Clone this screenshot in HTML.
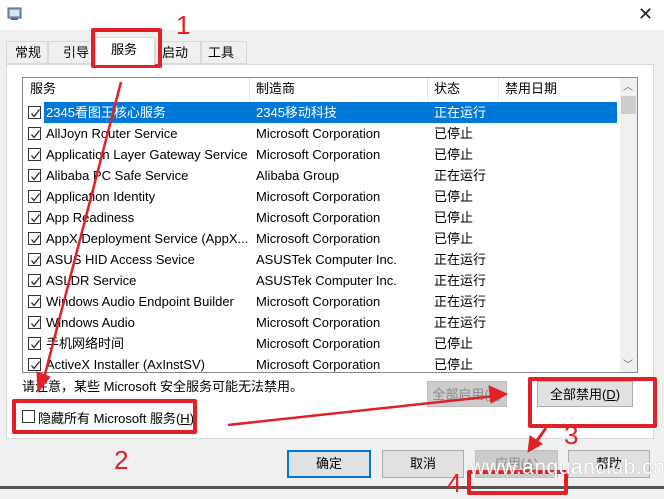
<!DOCTYPE html>
<html><head><meta charset="utf-8"><style>
*{margin:0;padding:0;box-sizing:border-box}
body{width:664px;height:489px;overflow:hidden;background:#f0f0f0;font-family:"Liberation Sans","Noto Sans CJK SC",sans-serif;font-size:13px;color:#000;position:relative}
.a{position:absolute;white-space:nowrap}
.row{position:absolute;left:23px;width:596px;height:21px;line-height:21px}
.cb{position:absolute;left:5px;top:4px;width:13px;height:13px;border:1px solid #333;background:#fff}
.cb svg{position:absolute;left:1px;top:1px}
.btn{position:absolute;background:#e1e1e1;border:1px solid #adadad;text-align:center;line-height:26px}
.red{position:absolute;border:4px solid #e02228;border-radius:2px}
.num{position:absolute;color:#e02228;font-size:26px;font-family:"Liberation Sans",sans-serif}
</style></head><body>
<div class="a" style="left:0;top:0;width:664px;height:30px;background:#fff"></div>
<svg class="a" style="left:7px;top:6px" width="16" height="16"><rect x="1" y="2" width="13" height="10" fill="#8aa6c8" stroke="#45607f"/><rect x="3" y="4" width="9" height="6" fill="#d8e6f5"/><rect x="4" y="12" width="7" height="2" fill="#666"/></svg>
<div class="a" style="left:638px;top:4px;font-size:18px;color:#222">✕</div>
<div class="a" style="left:6px;top:41px;width:42px;height:23px;border:1px solid #d9d9d9;background:#f0f0f0;line-height:21px;padding-left:8px">常规</div>
<div class="a" style="left:48px;top:41px;width:47px;height:23px;border:1px solid #d9d9d9;background:#f0f0f0;line-height:21px;padding-left:14px">引导</div>
<div class="a" style="left:95px;top:37px;width:60px;height:28px;border:1px solid #d9d9d9;border-bottom:none;background:#fff;line-height:24px;padding-left:15px;z-index:2">服务</div>
<div class="a" style="left:155px;top:41px;width:46px;height:23px;border:1px solid #d9d9d9;background:#f0f0f0;line-height:21px;padding-left:6px">启动</div>
<div class="a" style="left:201px;top:41px;width:46px;height:23px;border:1px solid #d9d9d9;background:#f0f0f0;line-height:21px;padding-left:6px">工具</div>
<div class="a" style="left:6px;top:64px;width:648px;height:375px;background:#fff;border:1px solid #d9d9d9"></div>
<div class="a" style="left:22px;top:77px;width:616px;height:296px;border:1px solid #828790;background:#fff;overflow:hidden">
<div class="a" style="left:0;top:0;width:597px;height:23px;line-height:22px">
<span class="a" style="left:7px">服务</span><span class="a" style="left:233px">制造商</span><span class="a" style="left:411px">状态</span><span class="a" style="left:482px">禁用日期</span>
<div class="a" style="left:226px;top:0;width:1px;height:23px;background:#e5e5e5"></div>
<div class="a" style="left:404px;top:0;width:1px;height:23px;background:#e5e5e5"></div>
<div class="a" style="left:475px;top:0;width:1px;height:23px;background:#e5e5e5"></div>
</div>
<div class="a" style="left:597px;top:0;width:17px;height:294px;background:#f0f0f0"></div>
<div class="a" style="left:598px;top:18px;width:15px;height:18px;background:#cdcdcd"></div>
<div class="a" style="left:600px;top:0;font-size:10px;color:#606060">︿</div>
<div class="a" style="left:600px;top:278px;font-size:10px;color:#606060">﹀</div>
</div>
<div class="a" style="left:44px;top:102px;width:573px;height:21px;background:#0078d7"></div>
<div id="rows"></div>
<script>
var d=[["2345看图王核心服务","2345移动科技","正在运行"],["AllJoyn Router Service","Microsoft Corporation","已停止"],["Application Layer Gateway Service","Microsoft Corporation","已停止"],["Alibaba PC Safe Service","Alibaba Group","正在运行"],["Application Identity","Microsoft Corporation","已停止"],["App Readiness","Microsoft Corporation","已停止"],["AppX Deployment Service (AppX...","Microsoft Corporation","已停止"],["ASUS HID Access Sevice","ASUSTek Computer Inc.","正在运行"],["ASLDR Service","ASUSTek Computer Inc.","正在运行"],["Windows Audio Endpoint Builder","Microsoft Corporation","正在运行"],["Windows Audio","Microsoft Corporation","正在运行"],["手机网络时间","Microsoft Corporation","已停止"],["ActiveX Installer (AxInstSV)","Microsoft Corporation","已停止"]];
var h="";d.forEach(function(r,i){var c=i==0?"#fff":"#000";var y=102+i*21;var H=i==12?(372-y):21;
h+='<div class="row" style="top:'+y+'px;height:'+H+'px;overflow:hidden"><div class="cb"><svg width="11" height="11"><path d="M1.5 5.5 L4 8.5 L9.5 1.5" fill="none" stroke="#222" stroke-width="1.2"/></svg></div><span class="a" style="left:23px;color:'+c+'">'+r[0]+'</span><span class="a" style="left:233px;color:'+c+'">'+r[1]+'</span><span class="a" style="left:411px;color:'+c+'">'+r[2]+'</span></div>';});
document.getElementById("rows").innerHTML=h;
</script>
<div class="a" style="left:22px;top:376px">请注意，某些 Microsoft 安全服务可能无法禁用。</div>
<div class="btn" style="left:427px;top:381px;width:80px;height:26px;background:#ccc;border-color:#bfbfbf;color:#888">全部启用(<u>E</u>)</div>
<div class="btn" style="left:537px;top:381px;width:96px;height:26px">全部禁用(<u>D</u>)</div>
<div class="a" style="left:22px;top:410px;width:13px;height:13px;border:1px solid #333;background:#fff"></div>
<div class="a" style="left:38px;top:408px">隐藏所有 Microsoft 服务(<u>H</u>)</div>
<div class="btn" style="left:287px;top:450px;width:84px;height:28px;border:2px solid #0078d7;line-height:24px">确定</div>
<div class="btn" style="left:382px;top:450px;width:82px;height:28px">取消</div>
<div class="btn" style="left:475px;top:450px;width:83px;height:28px;background:#ccc;border-color:#bfbfbf;color:#888">应用(<u>A</u>)</div>
<div class="btn" style="left:568px;top:450px;width:82px;height:28px">帮助</div>
<div class="a" style="left:0;top:486px;width:664px;height:3px;background:#555"></div>
<div class="red" style="left:91px;top:28px;width:71px;height:40px"></div>
<div class="red" style="left:12px;top:399px;width:185px;height:35px"></div>
<div class="red" style="left:528px;top:377px;width:129px;height:51px"></div>
<div class="red" style="left:467px;top:470px;width:101px;height:25px"></div>
<div class="num" style="left:176px;top:10px">1</div>
<div class="num" style="left:114px;top:445px">2</div>
<div class="num" style="left:564px;top:420px">3</div>
<div class="num" style="left:447px;top:468px">4</div>
<svg class="a" style="left:0;top:0" width="664" height="489">
<g fill="#e02228" stroke="#e02228">
<path d="M121 82 L44 378" stroke-width="2.5" fill="none"/>
<path d="M38 392 L37 372 L50 377 Z"/>
<path d="M228 425 L495 396" stroke-width="2.5" fill="none"/>
<path d="M507 394 L489 386 L491 403 Z"/>
<path d="M546 428 L536 442" stroke-width="3" fill="none"/>
<path d="M528 452 L530 436 L542 444 Z"/>
</g></svg>
<div class="a" style="left:470px;top:456px;font-size:21px;color:#fff;letter-spacing:0.5px;font-family:'Liberation Sans',sans-serif;text-shadow:0 0 1px #999">www.anquanclub.cn</div>
</body></html>
